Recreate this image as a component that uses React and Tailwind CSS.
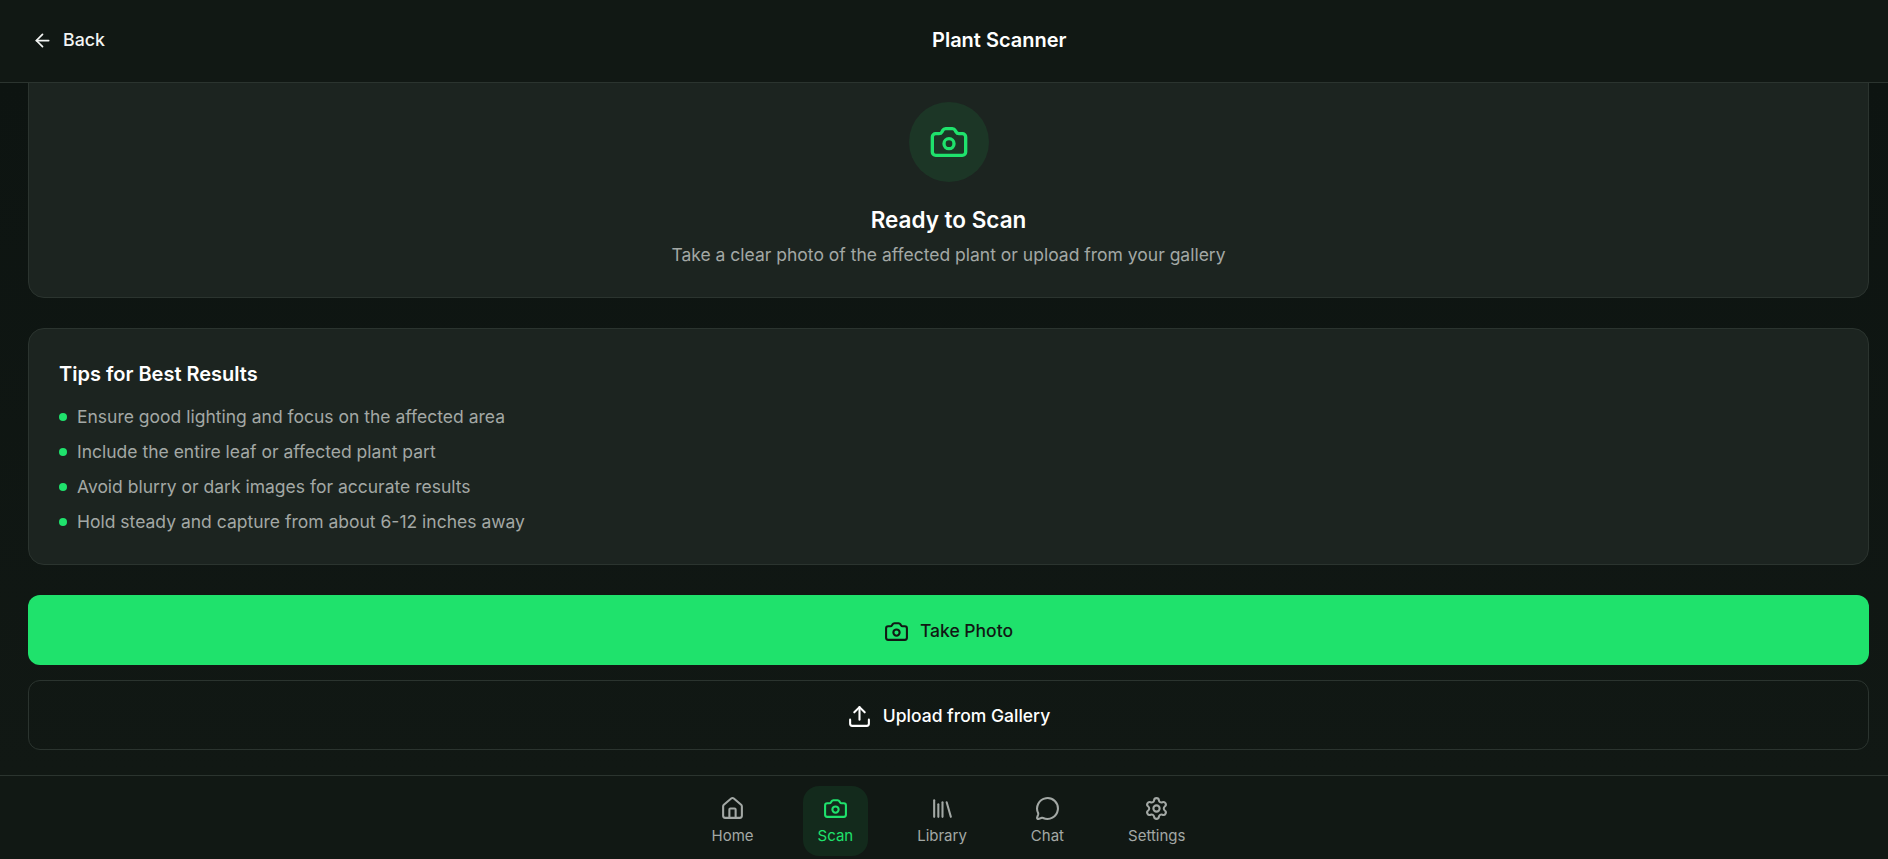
import React from 'react';
import { ArrowLeft, Camera, Upload, House, Library, MessageCircle, Settings } from 'lucide-react';

const tips = [
  "Ensure good lighting and focus on the affected area",
  "Include the entire leaf or affected plant part",
  "Avoid blurry or dark images for accurate results",
  "Hold steady and capture from about 6-12 inches away",
];

const navItems = [
  { label: "Home", Icon: House },
  { label: "Scan", Icon: Camera, active: true },
  { label: "Library", Icon: Library },
  { label: "Chat", Icon: MessageCircle },
  { label: "Settings", Icon: Settings },
];

const App = () => {
  return (
    <div className="flex flex-col h-[859px] overflow-hidden bg-[#111814] font-['Inter',sans-serif]">
      {/* Header */}
      <header className="flex items-center h-[83px] shrink-0 pl-[32px] pb-[2px] bg-[#111814] border-b border-[#2b342f] z-10">
        <div className="flex items-center gap-[10px] w-[900px] text-[#f2f4f3]">
          <ArrowLeft size={21} />
          <span className="text-[17.75px] font-medium">Back</span>
        </div>
        <h1 className="text-xl font-semibold text-white">Plant Scanner</h1>
      </header>

      {/* Content */}
      <main className="flex-1 flex flex-col overflow-hidden pl-[28px] pr-[19px] bg-linear-to-b from-[#0d1411] to-[#111814]">
        <section className="flex flex-col items-center h-[216px] shrink-0 -mt-px pt-[19px] bg-[#1c2420] border border-[#2b342f] rounded-b-2xl">
          <div className="flex items-center justify-center w-[80px] h-[80px] rounded-full bg-[#1c3626]">
            <Camera size={40} strokeWidth={2} className="text-[#1fe26c]" />
          </div>
          <h2 className="mt-[23px] text-[22.5px] leading-[30px] font-semibold text-white">Ready to Scan</h2>
          <p className="mt-[8px] text-[17.5px] leading-[24px] text-[#a3a8a5]">Take a clear photo of the affected plant or upload from your gallery</p>
        </section>

        <section className="mt-[30px] h-[237px] shrink-0 px-[30px] pt-[31px] bg-[#1c2420] border border-[#2b342f] rounded-2xl">
          <h3 className="text-xl leading-[28px] font-semibold text-white">Tips for Best Results</h3>
          <ul className="mt-[17px] flex flex-col gap-[11px]">
            {tips.map((tip) => (
              <li key={tip} className="flex items-center gap-[10px] h-[24px] text-[17.5px] text-[#a3a8a5]">
                <span className="w-2 h-2 rounded-full bg-[#1fe26c]" />
                {tip}
              </li>
            ))}
          </ul>
        </section>

        <button className="mt-[30px] flex items-center justify-center gap-[11px] h-[70px] shrink-0 pt-[2px] rounded-xl bg-[#1fe26c] text-[#111814] text-[17.5px] font-medium">
          <Camera size={25} />
          Take Photo
        </button>
        <button className="mt-[15px] flex items-center justify-center gap-[11px] h-[70px] shrink-0 pt-[2px] rounded-xl border border-[#2b342f] text-white text-[17.5px] font-medium">
          <Upload size={25} />
          Upload from Gallery
        </button>
      </main>

      {/* Bottom nav */}
      <nav className="flex items-start justify-center gap-[34px] h-[84px] shrink-0 pt-[10px] pl-[28px] pr-[19px] bg-[#111814] border-t border-[#2b342f]">
        {navItems.map(({ label, Icon, active }) => (
          <div
            key={label}
            className={`flex flex-col items-center gap-[4px] h-[70px] pt-[10px] px-[15px] rounded-2xl text-[15px] leading-[22px] ${active ? "bg-[#132a1c] text-[#1fe26c]" : "text-[#a3a8a5]"}`}
          >
            <Icon size={25} />
            <span>{label}</span>
          </div>
        ))}
      </nav>
    </div>
  );
};

export default App;
